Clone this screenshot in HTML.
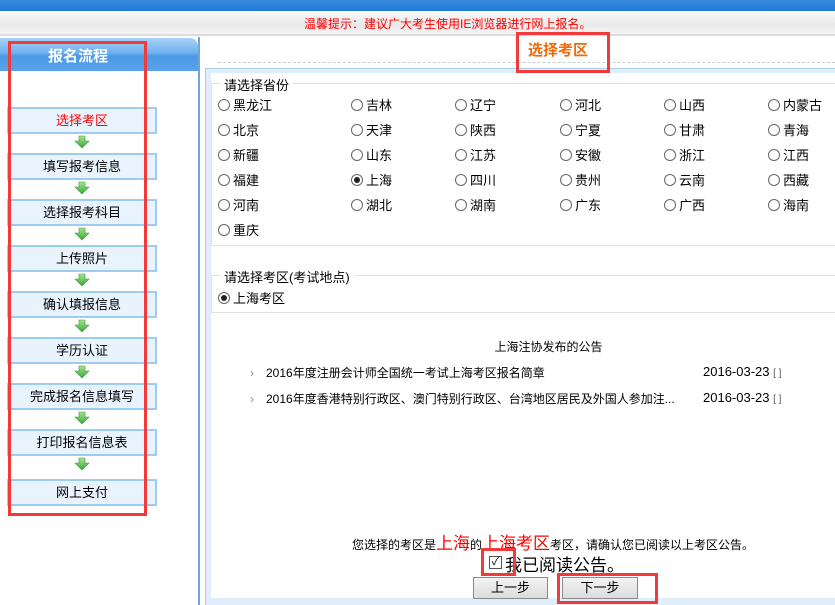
<!DOCTYPE html>
<html><head><meta charset="utf-8"><style>
*{margin:0;padding:0;box-sizing:border-box}
body{width:835px;height:605px;overflow:hidden;background:#fff;font-family:"Liberation Sans","Noto Sans CJK SC",sans-serif;font-size:12px;color:#000;position:relative}
.a{position:absolute}
.top{left:0;top:0;width:835px;height:11px;background:linear-gradient(#3a8be0,#1f7ad6)}
.gray{left:0;top:12px;width:835px;height:24px;background:linear-gradient(#f9f9f9,#e8e8e8 60%,#f5f5f5);border-bottom:2px solid #dcdcdc}
.notice{top:15px;left:304px;color:#f00;font-size:12px;white-space:nowrap}
.lh{left:0;top:38px;width:198px;height:33px;background:linear-gradient(#a9d2f7,#6fb0ef 45%,#4a98e6 55%,#5aa3ea);border-radius:0 8px 0 0;color:#fff;font-weight:bold;font-size:15px;text-align:center;line-height:38px;padding-right:42px}
.lline{left:198px;top:37px;width:2px;height:568px;background:#6ea6d8}
.step{left:7px;width:150px;height:27px;background:#e8f3fd;border:2px solid #9ccdf1;text-align:center;line-height:23px;font-size:13px}
.red{border:3px solid #f23a3a}
.ttl{left:528px;top:39px;color:#f06a0a;font-weight:bold;font-size:15px}
.dash{left:218px;top:62px;width:617px;border-top:1px dashed #ccc}
.panel{left:205px;top:68px;width:630px;height:537px;background:#e0eefb;border-top:1px solid #a8d0ee;border-left:1px solid #a8d0ee}
.inner{left:211px;top:73px;width:624px;height:525px;background:#fff}
.fs{border:1px solid #e2e2e2;border-right:none}
.leg{background:#fff;padding:0 4px;font-size:13px}
.r{font-size:13px;display:flex;align-items:center}
.rb{width:12px;height:12px;border:1px solid #666;border-radius:50%;margin-right:3px;position:relative;background:#fff}
.rb.on:after{content:"";position:absolute;left:2px;top:2px;width:6px;height:6px;border-radius:50%;background:#222}
.btn{height:22px;border:1px solid #8a8a8a;background:linear-gradient(#f4f4f4,#dcdcdc);text-align:center;line-height:20px;font-size:13px}
</style></head><body>
<div class="a top"></div>
<div class="a gray"></div>
<div class="a notice">温馨提示：建议广大考生使用IE浏览器进行网上报名。</div>
<div class="a lh">报名流程</div>
<div class="a lline"></div>

<div class="a step" style="top:107px;color:#f00">选择考区</div>
<div class="a step" style="top:153px">填写报考信息</div>
<div class="a step" style="top:199px">选择报考科目</div>
<div class="a step" style="top:245px">上传照片</div>
<div class="a step" style="top:291px">确认填报信息</div>
<div class="a step" style="top:337px">学历认证</div>
<div class="a step" style="top:383px">完成报名信息填写</div>
<div class="a step" style="top:429px">打印报名信息表</div>
<div class="a step" style="top:479px">网上支付</div>

<svg class="a" style="left:0;top:0" width="200" height="605">
<defs><linearGradient id="g" x1="0" y1="0" x2="0" y2="1"><stop offset="0" stop-color="#a6e68a"/><stop offset="1" stop-color="#3aa53a"/></linearGradient></defs>
<g fill="url(#g)" stroke="#3f9a3f" stroke-width="0.6">
<path d="M79 136h6v5h4l-7 7-7-7h4z"/>
<path d="M79 182h6v5h4l-7 7-7-7h4z"/>
<path d="M79 228h6v5h4l-7 7-7-7h4z"/>
<path d="M79 274h6v5h4l-7 7-7-7h4z"/>
<path d="M79 320h6v5h4l-7 7-7-7h4z"/>
<path d="M79 366h6v5h4l-7 7-7-7h4z"/>
<path d="M79 412h6v5h4l-7 7-7-7h4z"/>
<path d="M79 458h6v5h4l-7 7-7-7h4z"/>
</g></svg>

<div class="a red" style="left:8px;top:41px;width:139px;height:475px"></div>

<div class="a ttl">选择考区</div>
<div class="a dash"></div>
<div class="a panel"></div>
<div class="a inner"></div>

<div class="a fs" style="left:211px;top:83px;width:624px;height:163px"></div>
<div class="a leg" style="left:220px;top:75px">请选择省份</div>

<div class="a fs" style="left:211px;top:275px;width:624px;height:38px"></div>
<div class="a leg" style="left:220px;top:267px">请选择考区(考试地点)</div>
<div class="a r" style="left:218px;top:288px"><span class="rb on"></span>上海考区</div>

<div id="prov"></div>

<div class="a" style="left:0;top:338px;width:1097px;text-align:center;font-size:12px">上海注协发布的公告</div>
<div class="a" style="left:250px;top:364px;font-size:12px;width:450px"><span style="color:#888;margin-right:12px">›</span>2016年度注册会计师全国统一考试上海考区报名简章</div>
<div class="a" style="left:703px;top:364px;font-size:13px">2016-03-23 <span style="font-size:10px;color:#555">[ ]</span></div>
<div class="a" style="left:250px;top:390px;font-size:12px;width:450px"><span style="color:#888;margin-right:12px">›</span>2016年度香港特别行政区、澳门特别行政区、台湾地区居民及外国人参加注...</div>
<div class="a" style="left:703px;top:390px;font-size:13px">2016-03-23 <span style="font-size:10px;color:#555">[ ]</span></div>

<div class="a" style="left:352px;top:529px;font-size:12px;white-space:nowrap">您选择的考区是<span style="color:#f00;font-size:17px">上海</span>的<span style="color:#f00;font-size:17px">上海考区</span>考区，请确认您已阅读以上考区公告。</div>
<div class="a" style="left:489px;top:556px;width:13px;height:13px;border:1px solid #555;font-size:11px;line-height:11px;text-align:center">✓</div>
<div class="a" style="left:505px;top:551px;font-size:17px">我已阅读公告。</div>
<div class="a red" style="left:481px;top:548px;width:35px;height:28px"></div>
<div class="a btn" style="left:473px;top:577px;width:75px">上一步</div>
<div class="a btn" style="left:562px;top:577px;width:76px">下一步</div>
<div class="a red" style="left:557px;top:573px;width:101px;height:31px"></div>
<div class="a red" style="left:516px;top:32px;width:94px;height:41px"></div>

<script>
var p=[["黑龙江","吉林","辽宁","河北","山西","内蒙古"],["北京","天津","陕西","宁夏","甘肃","青海"],["新疆","山东","江苏","安徽","浙江","江西"],["福建","上海","四川","贵州","云南","西藏"],["河南","湖北","湖南","广东","广西","海南"],["重庆"]];
var xs=[218,351,455,560,664,768],h="";
p.forEach(function(r,i){r.forEach(function(n,j){h+='<div class="a r" style="left:'+xs[j]+'px;top:'+(95+i*25)+'px"><span class="rb'+(n=="上海"?" on":"")+'"></span>'+n+'</div>';});});
document.getElementById("prov").innerHTML=h;
</script>
</body></html>
